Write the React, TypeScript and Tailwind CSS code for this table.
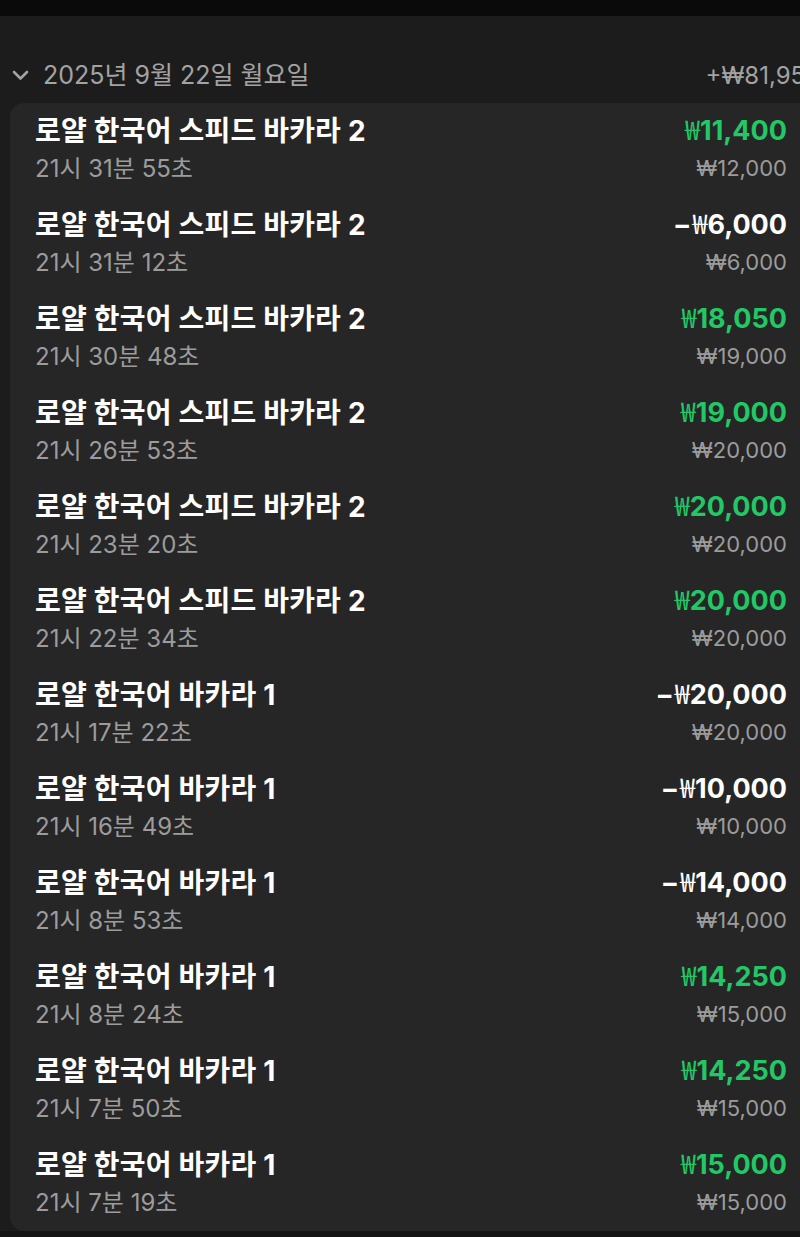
import React from "react";

type Bet = { game: string; time: string; neg: boolean; amount: string; win: boolean; stake: string };

const bets: Bet[] = [
    { game: "로얄 한국어 스피드 바카라 2", time: "21시 31분 55초", neg: false, amount: "11,400", win: true, stake: "₩12,000" },
    { game: "로얄 한국어 스피드 바카라 2", time: "21시 31분 12초", neg: true, amount: "6,000", win: false, stake: "₩6,000" },
    { game: "로얄 한국어 스피드 바카라 2", time: "21시 30분 48초", neg: false, amount: "18,050", win: true, stake: "₩19,000" },
    { game: "로얄 한국어 스피드 바카라 2", time: "21시 26분 53초", neg: false, amount: "19,000", win: true, stake: "₩20,000" },
    { game: "로얄 한국어 스피드 바카라 2", time: "21시 23분 20초", neg: false, amount: "20,000", win: true, stake: "₩20,000" },
    { game: "로얄 한국어 스피드 바카라 2", time: "21시 22분 34초", neg: false, amount: "20,000", win: true, stake: "₩20,000" },
    { game: "로얄 한국어 바카라 1", time: "21시 17분 22초", neg: true, amount: "20,000", win: false, stake: "₩20,000" },
    { game: "로얄 한국어 바카라 1", time: "21시 16분 49초", neg: true, amount: "10,000", win: false, stake: "₩10,000" },
    { game: "로얄 한국어 바카라 1", time: "21시 8분 53초", neg: true, amount: "14,000", win: false, stake: "₩14,000" },
    { game: "로얄 한국어 바카라 1", time: "21시 8분 24초", neg: false, amount: "14,250", win: true, stake: "₩15,000" },
    { game: "로얄 한국어 바카라 1", time: "21시 7분 50초", neg: false, amount: "14,250", win: true, stake: "₩15,000" },
    { game: "로얄 한국어 바카라 1", time: "21시 7분 19초", neg: false, amount: "15,000", win: true, stake: "₩15,000" },
];

const font = { fontFamily: "Inter, 'Noto Sans CJK KR', sans-serif" };
const won = { fontFamily: "'Noto Sans CJK KR', sans-serif" };

function BetRow({ bet }: { bet: Bet }) {
    return (
        <div className="flex h-[94px] items-start justify-between pt-[11px]">
            <div>
                <div className="text-[28px] font-bold leading-[34px] tracking-[0.2px] text-white">{bet.game}</div>
                <div className="mt-[6px] text-[24px] leading-[30px] text-[#9c9c9c]">{bet.time}</div>
            </div>
            <div className="text-right">
                <div className={`text-[27px] font-bold leading-[34px] ${bet.win ? "text-[#22c866]" : "text-white"}`}>
                    {bet.neg && <span className="mr-[1px]">−</span>}
                    <span className="font-normal leading-none" style={won}>₩</span>
                    {bet.amount}
                </div>
                <div className="mt-[5px] text-[22px] leading-[30px] text-[#9c9c9c]">{bet.stake}</div>
            </div>
        </div>
    );
}

export default function App() {
    return (
        <div className="h-[1237px] w-[800px] overflow-hidden bg-[#1c1c1c]" style={font}>
            <div className="h-4 bg-[#0a0a0a]" />
            <div className="w-[830px]">
                <div className="flex h-[87px] items-end justify-between pb-[9px] pl-[12px] pr-[10px]">
                    <div className="flex items-center gap-[14px] text-[25px] text-[#a3a3a3]">
                        <svg width="17" height="11" viewBox="0 0 17 11" fill="none">
                            <path d="M2 2l6.5 6.5L15 2" stroke="#a3a3a3" strokeWidth="2.6" strokeLinecap="round" strokeLinejoin="round" />
                        </svg>
                        <span>2025년 9월 22일 월요일</span>
                    </div>
                    <span className="text-[24px] text-[#a3a3a3]">+₩81,956</span>
                </div>
                <div className="ml-[10px] rounded-[14px] bg-[#262626] pl-[25px] pr-[43px]">
                    {bets.map((b, i) => (
                        <BetRow key={i} bet={b} />
                    ))}
                </div>
                <div className="h-2 bg-[#141414]" />
            </div>
        </div>
    );
}
